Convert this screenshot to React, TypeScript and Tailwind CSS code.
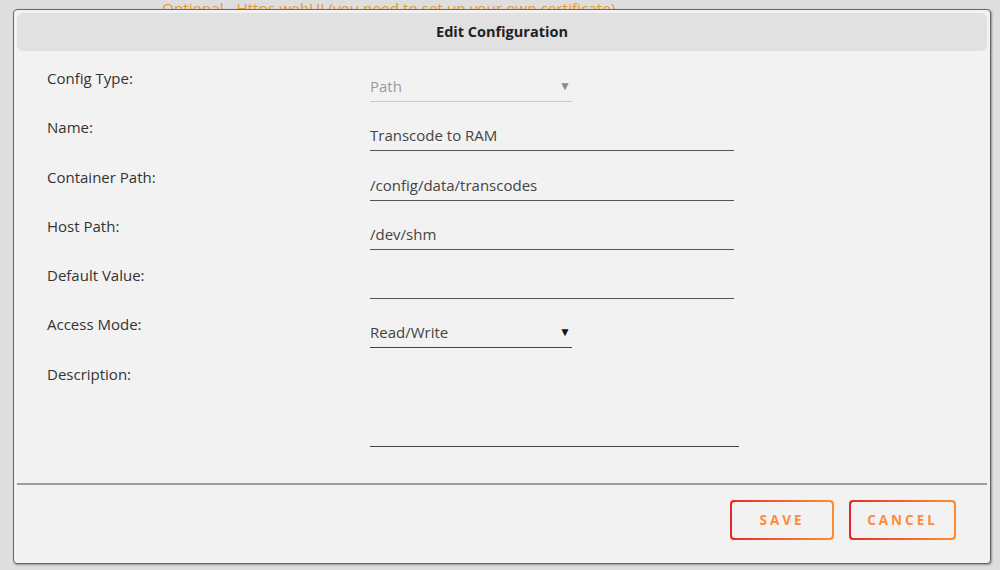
import React from 'react';

interface Field {
  label: string;
  kind: 'select' | 'input' | 'textarea';
  value: string;
  muted?: boolean;
}

const FIELDS: Field[] = [
  { label: 'Config Type:', kind: 'select', value: 'Path', muted: true },
  { label: 'Name:', kind: 'input', value: 'Transcode to RAM' },
  { label: 'Container Path:', kind: 'input', value: '/config/data/transcodes' },
  { label: 'Host Path:', kind: 'input', value: '/dev/shm' },
  { label: 'Default Value:', kind: 'input', value: '' },
  { label: 'Access Mode:', kind: 'select', value: 'Read/Write' },
  { label: 'Description:', kind: 'textarea', value: '' },
];

const FieldControl: React.FC<{ field: Field }> = ({ field }) => {
  if (field.kind === 'select') {
    return (
      <div
        className={
          field.muted
            ? 'w-[202px] flex items-center justify-between pt-[7px] pb-[5px] border-b border-[#c8c8c8]'
            : 'w-[202px] flex items-center justify-between pt-[7px] pb-[5px] border-b border-[#444]'
        }
      >
        <span className={field.muted ? 'leading-5 text-[#9a9a9a]' : 'leading-5 text-[#444]'}>{field.value}</span>
        <span className={field.muted ? 'text-[12px] leading-5 mr-[1px] text-[#8a8a8a]' : 'text-[12px] leading-5 mr-[1px] text-[#111]'}>▼</span>
      </div>
    );
  }
  if (field.kind === 'textarea') {
    return <div className="w-[369px] h-[82px] border-b border-[#444]" />;
  }
  return (
    <div className="w-[364px] pt-[7px] pb-[5px] border-b border-[#555]">
      <span className="block leading-5 h-5 text-[#444]">{field.value}</span>
    </div>
  );
};

const OutlineButton: React.FC<{ label: string; width: string }> = ({ label, width }) => (
  <div className={`p-[2px] rounded-[4px] bg-gradient-to-r from-[#e4262a] to-[#ff8c2f] ${width}`}>
    <div className="h-[36px] rounded-[3px] bg-[#f2f2f2] flex items-center justify-center">
      <span className="text-[13.5px] font-bold tracking-[3px] text-[#ff8b3b]">{label}</span>
    </div>
  </div>
);

export default function App() {
  return (
    <div
      className="relative w-[1000px] h-[570px] overflow-hidden bg-[#dedede] text-[15px]"
      style={{ fontFamily: '"Open Sans", "Noto Sans", sans-serif' }}
    >
      {/* page text behind the dialog */}
      <div className="absolute left-[162px] top-[-2px] text-[15.3px] leading-5 text-[#e59a2e]">
        Optional - Https webUI (you need to set up your own certificate)
      </div>

      <div className="relative ml-[13px] mt-[9px] w-[978px] h-[555px] bg-[#f2f2f2] border border-[#666] rounded-[4px] shadow-[1px_1px_2px_rgba(0,0,0,0.35)] p-[3px] flex flex-col">
        <div className="h-[38px] rounded-[6px] bg-[#e1e1e1] flex items-center justify-center">
          <span className="font-bold text-[14.5px] text-[#222]">Edit Configuration</span>
        </div>

        <div className="flex flex-col pt-[18px] pl-[30px]">
          {FIELDS.map((f) => (
            <div key={f.label} className="flex items-start h-[49.3px]">
              <div className="w-[323px] -mt-[1px] leading-5 text-[#333]">{f.label}</div>
              <FieldControl field={f} />
            </div>
          ))}
        </div>

        <div className="mt-auto border-t-2 border-[#9c9c9c]" />
        <div className="h-[75px] flex items-start justify-end gap-[15px] pt-[15px] pr-[31px]">
          <OutlineButton label="SAVE" width="w-[104px]" />
          <OutlineButton label="CANCEL" width="w-[107px]" />
        </div>
      </div>
    </div>
  );
}
